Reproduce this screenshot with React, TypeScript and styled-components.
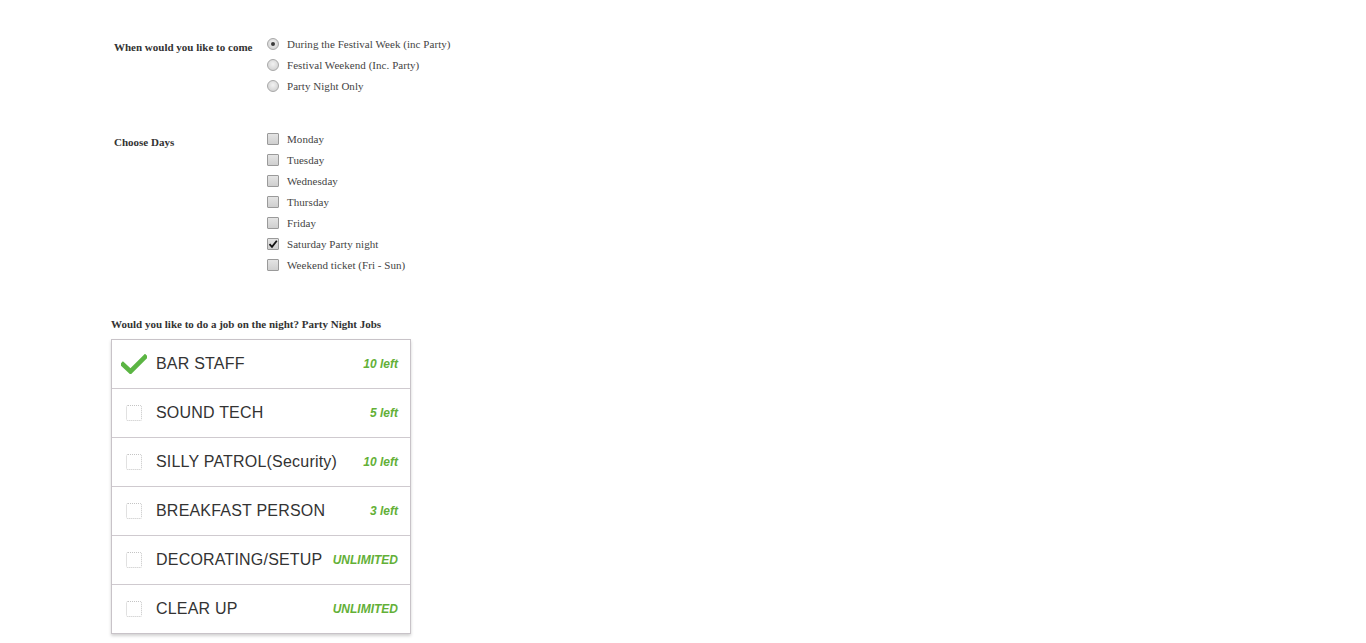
import React from "react";
import styled, { createGlobalStyle } from "styled-components";

const Global = createGlobalStyle`
  html, body { margin: 0; padding: 0; background: #fff; }
  body { font-family: "Liberation Serif", "Times New Roman", serif; color: #333; }
`;

const Page = styled.div`
  padding: 33px 0 360px 111px;
  min-height: 1000px;
  box-sizing: border-box;
`;

const Section = styled.div<{ $gap?: number }>`
  display: flex;
  margin-left: 3px;
  margin-bottom: ${(p) => p.$gap ?? 0}px;
`;

const Label = styled.div`
  width: 153px;
  padding-top: 8px;
  font-size: 11px;
  line-height: 13px;
  font-weight: bold;
  color: #333;
`;

const Options = styled.div`
  display: flex;
  flex-direction: column;
`;

const Option = styled.label`
  display: flex;
  align-items: center;
  height: 21px;
  font-size: 11px;
  color: #444;
  gap: 8px;
  letter-spacing: 0.05px;
`;

const Radio = styled.span<{ $on?: boolean }>`
  width: 10px;
  height: 10px;
  border-radius: 50%;
  border: 1px solid #a8a8a8;
  background: radial-gradient(circle at 50% 40%, #f2f2f2 0%, #d6d6d6 70%, #c8c8c8 100%);
  display: flex;
  align-items: center;
  justify-content: center;
  &::after {
    content: "";
    display: ${(p) => (p.$on ? "block" : "none")};
    width: 4px;
    height: 4px;
    border-radius: 50%;
    background: #3a3a3a;
  }
`;

const Box = styled.span`
  width: 10px;
  height: 10px;
  border: 1px solid #9a9a9a;
  border-radius: 1px;
  background: linear-gradient(#e4e4e4, #cfcfcf);
  display: flex;
  align-items: center;
  justify-content: center;
`;

const JobsHeading = styled.div`
  font-size: 11px;
  line-height: 13px;
  font-weight: bold;
  color: #333;
  margin-bottom: 8px;
`;

const JobList = styled.div`
  width: 298px;
  border: 1px solid #c8c3c8;
  box-shadow: 0 2px 3px rgba(0, 0, 0, 0.18);
  background: #fff;
`;

const JobRow = styled.div`
  display: flex;
  align-items: center;
  height: 48px;
  border-top: 1px solid #cfcacf;
  padding: 0 12px 0 0;
  font-family: "Liberation Sans", Arial, sans-serif;
  &:first-child { border-top: none; }
`;

const Mark = styled.div`
  width: 44px;
  display: flex;
  align-items: center;
  justify-content: center;
`;

const EmptyBox = styled.span`
  width: 14px;
  height: 14px;
  border: 1px dotted #c4c4c4;
  border-radius: 2px;
  background: #fff;
`;

const JobName = styled.span`
  flex: 1;
  font-size: 16px;
  color: #333;
  white-space: nowrap;
  letter-spacing: 0.2px;
`;

const Left = styled.span`
  font-size: 12px;
  font-weight: bold;
  font-style: italic;
  color: #63b037;
`;

const GreenCheck = () => (
  <svg width="26" height="20" viewBox="0 0 26 20">
    <path d="M2 10.5 L9.5 17.5 L24 3" fill="none" stroke="#5bb543" strokeWidth="4.6" strokeLinecap="square" strokeLinejoin="miter" />
  </svg>
);

const SmallCheck = () => (
  <svg width="10" height="10" viewBox="0 0 10 10">
    <path d="M1.5 5.2 L4 7.8 L8.8 1.8" fill="none" stroke="#111" strokeWidth="1.8" />
  </svg>
);

const times = [
  { t: "During the Festival Week (inc Party)", on: true },
  { t: "Festival Weekend (Inc. Party)", on: false },
  { t: "Party Night Only", on: false },
];

const days = [
  { t: "Monday", on: false },
  { t: "Tuesday", on: false },
  { t: "Wednesday", on: false },
  { t: "Thursday", on: false },
  { t: "Friday", on: false },
  { t: "Saturday Party night", on: true },
  { t: "Weekend ticket (Fri - Sun)", on: false },
];

const jobs = [
  { n: "BAR STAFF", l: "10 left", on: true },
  { n: "SOUND TECH", l: "5 left", on: false },
  { n: "SILLY PATROL(Security)", l: "10 left", on: false },
  { n: "BREAKFAST PERSON", l: "3 left", on: false },
  { n: "DECORATING/SETUP", l: "UNLIMITED", on: false },
  { n: "CLEAR UP", l: "UNLIMITED", on: false },
];

export default function App() {
  return (
    <>
      <Global />
      <Page>
        <Section $gap={32}>
          <Label>When would you like to come</Label>
          <Options>
            {times.map((o) => (
              <Option key={o.t}>
                <Radio $on={o.on} />
                {o.t}
              </Option>
            ))}
          </Options>
        </Section>
        <Section $gap={43}>
          <Label>Choose Days</Label>
          <Options>
            {days.map((o) => (
              <Option key={o.t}>
                <Box>{o.on && <SmallCheck />}</Box>
                {o.t}
              </Option>
            ))}
          </Options>
        </Section>
        <JobsHeading>Would you like to do a job on the night? Party Night Jobs</JobsHeading>
        <JobList>
          {jobs.map((j) => (
            <JobRow key={j.n}>
              <Mark>{j.on ? <GreenCheck /> : <EmptyBox />}</Mark>
              <JobName>{j.n}</JobName>
              <Left>{j.l}</Left>
            </JobRow>
          ))}
        </JobList>
      </Page>
    </>
  );
}
